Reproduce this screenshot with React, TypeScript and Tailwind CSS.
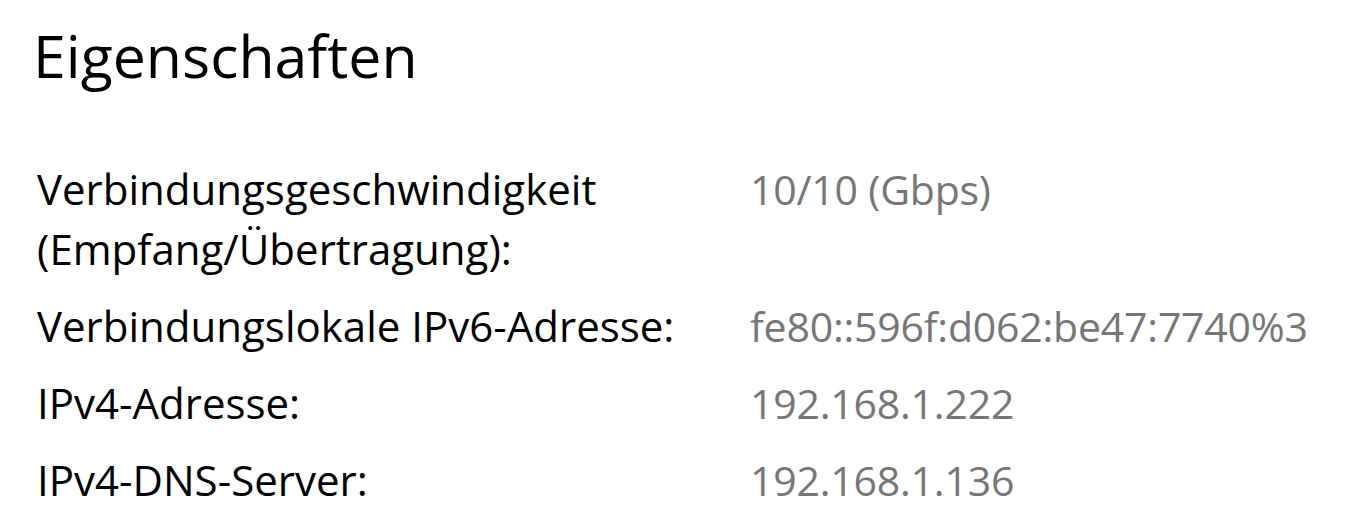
import React from 'react';

const rows: { label: string[]; value: string }[] = [
  { label: ['Verbindungsgeschwindigkeit', '(Empfang/Übertragung):'], value: '10/10 (Gbps)' },
  { label: ['Verbindungslokale IPv6-Adresse:'], value: 'fe80::596f:d062:be47:7740%3' },
  { label: ['IPv4-Adresse:'], value: '192.168.1.222' },
  { label: ['IPv4-DNS-Server:'], value: '192.168.1.136' },
];

export default function App() {
  return (
    <div className="bg-white h-[512px] overflow-hidden font-['Open_Sans',sans-serif] text-black">
      <h1 className="pl-[33px] pt-[15px] text-[59px] leading-[80px] font-normal">Eigenschaften</h1>
      <div className="mt-[64px] pl-[37px] grid grid-cols-[713px_1fr] gap-y-[17px] text-[42px] leading-[60px]">
        {rows.map((r) => (
          <React.Fragment key={r.value}>
            <div>
              {r.label.map((l) => (
                <div key={l} className="whitespace-nowrap">{l}</div>
              ))}
            </div>
            <div className="text-[41px] text-[#767676] whitespace-nowrap tracking-[-0.2px]">{r.value}</div>
          </React.Fragment>
        ))}
      </div>
    </div>
  );
}
